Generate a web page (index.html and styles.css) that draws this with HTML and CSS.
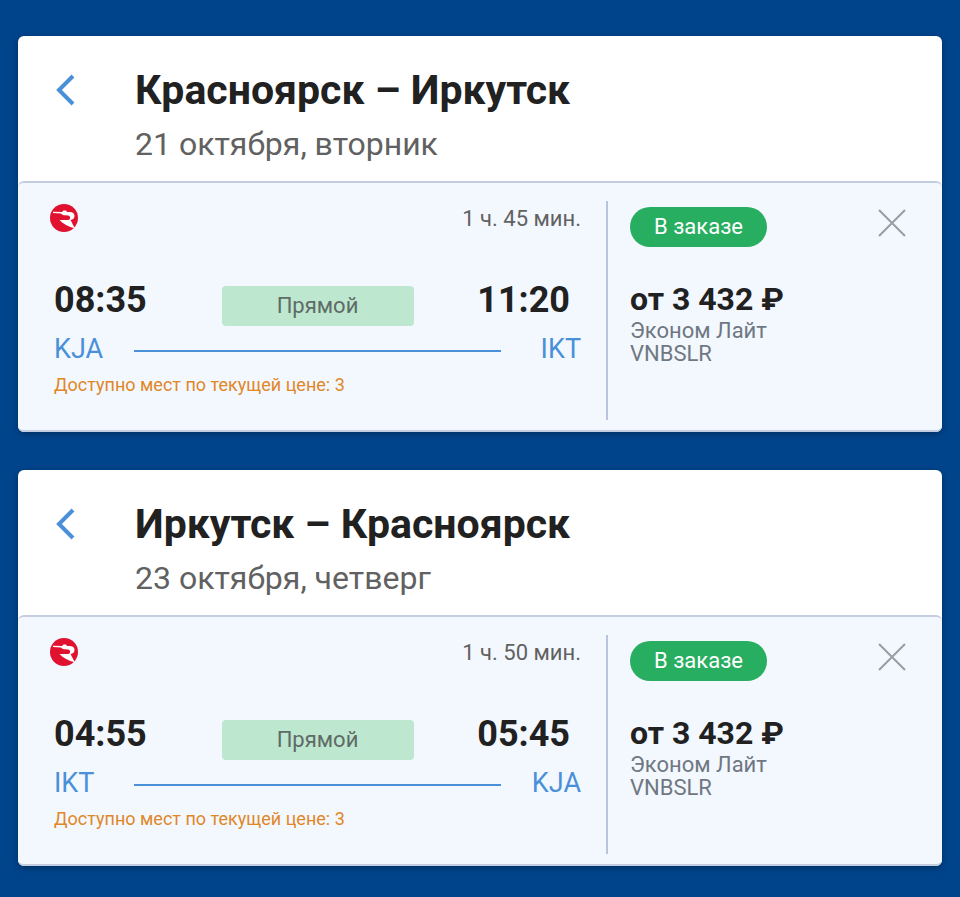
FILE: index.html
```html
<!DOCTYPE html>
<html lang="ru">
<head>
    <meta charset="UTF-8">
    <meta name="viewport" content="width=device-width, initial-scale=1.0">
    <title>Красноярск – Иркутск</title>
    <link rel="stylesheet" href="styles.css">
</head>
<body>

    <main class="trips">
        <section class="card">
            <header class="card-header">
                <button type="button" class="back" aria-label="Назад">
                    <svg width="20" height="32" viewBox="0 0 20 32"><path d="M18 2 4 16l14 14" fill="none" stroke="currentColor" stroke-width="4"/></svg>
                </button>
                <div>
                    <h2>Красноярск – Иркутск</h2>
                    <p class="date">21 октября, вторник</p>
                </div>
            </header>
            <div class="card-body">
                <div class="flight">
                    <div class="flight-top">
                        <svg class="airline" viewBox="0 0 28 28" role="img" aria-label="Россия">
                            <circle cx="14" cy="14" r="14" fill="#e0122f"/>
                            <path d="M3 7.700 12 8l1.500-1.500h2.500L17 8h2.500c3.200 0 5 1.300 5 3.900 0 2.200-1.500 3.500-4 4l4.300 8.300C18.500 22.800 13 20 9.500 16h7.300c2.300 0 3.400-.7 3.400-2.300 0-1.700-1.400-2.500-4.200-2.500-2 .3-4-.2-5-1.700L3 9z" fill="#fff"/>
                        </svg>
                        <span class="duration">1 ч. 45 мин.</span>
                    </div>
                    <div class="times">
                        <span class="time">08:35</span>
                        <span class="stops">Прямой</span>
                        <span class="time time-end">11:20</span>
                    </div>
                    <div class="airports">
                        <span class="code">KJA</span>
                        <span class="line"></span>
                        <span class="code code-end">IKT</span>
                    </div>
                    <p class="seats">Доступно мест по текущей цене: 3</p>
                </div>
                <div class="order">
                    <div class="order-top">
                        <span class="status">В заказе</span>
                        <button type="button" class="remove" aria-label="Удалить">
                            <svg width="28" height="28" viewBox="0 0 28 28"><path d="M1 1l26 26M27 1 1 27" stroke="currentColor" stroke-width="2"/></svg>
                        </button>
                    </div>
                    <p class="price">от 3 432 ₽</p>
                    <p class="tariff">Эконом Лайт</p>
                    <p class="tariff">VNBSLR</p>
                </div>
            </div>
        </section>

        <section class="card">
            <header class="card-header">
                <button type="button" class="back" aria-label="Назад">
                    <svg width="20" height="32" viewBox="0 0 20 32"><path d="M18 2 4 16l14 14" fill="none" stroke="currentColor" stroke-width="4"/></svg>
                </button>
                <div>
                    <h2>Иркутск – Красноярск</h2>
                    <p class="date">23 октября, четверг</p>
                </div>
            </header>
            <div class="card-body">
                <div class="flight">
                    <div class="flight-top">
                        <svg class="airline" viewBox="0 0 28 28" role="img" aria-label="Россия">
                            <circle cx="14" cy="14" r="14" fill="#e0122f"/>
                            <path d="M3 7.700 12 8l1.500-1.500h2.500L17 8h2.500c3.200 0 5 1.300 5 3.900 0 2.200-1.500 3.500-4 4l4.300 8.300C18.500 22.800 13 20 9.500 16h7.300c2.300 0 3.400-.7 3.400-2.300 0-1.700-1.400-2.500-4.200-2.500-2 .3-4-.2-5-1.700L3 9z" fill="#fff"/>
                        </svg>
                        <span class="duration">1 ч. 50 мин.</span>
                    </div>
                    <div class="times">
                        <span class="time">04:55</span>
                        <span class="stops">Прямой</span>
                        <span class="time time-end">05:45</span>
                    </div>
                    <div class="airports">
                        <span class="code">IKT</span>
                        <span class="line"></span>
                        <span class="code code-end">KJA</span>
                    </div>
                    <p class="seats">Доступно мест по текущей цене: 3</p>
                </div>
                <div class="order">
                    <div class="order-top">
                        <span class="status">В заказе</span>
                        <button type="button" class="remove" aria-label="Удалить">
                            <svg width="28" height="28" viewBox="0 0 28 28"><path d="M1 1l26 26M27 1 1 27" stroke="currentColor" stroke-width="2"/></svg>
                        </button>
                    </div>
                    <p class="price">от 3 432 ₽</p>
                    <p class="tariff">Эконом Лайт</p>
                    <p class="tariff">VNBSLR</p>
                </div>
            </div>
        </section>
    </main>

</body>
</html>
```
FILE: styles.css
```css
* {
    box-sizing: border-box;
}
body {
    font-family: Roboto, Arial, sans-serif;
    margin: 0;
    background-color: #00448b;
    color: #212121;
}
h2, p {
    margin: 0;
}
button {
    padding: 0;
    border: none;
    background: none;
    cursor: pointer;
}
svg {
    display: block;
}
.trips {
    display: flex;
    flex-direction: column;
    gap: 38px;
    padding: 36px 18px 30px;
}
.card {
    background-color: white;
    border-radius: 6px;
    box-shadow: 0 2px 6px rgba(0, 0, 0, 0.3);
}
.card-header {
    display: flex;
    align-items: flex-start;
    gap: 60px;
    padding: 30px 38px 17px 37px;
}
.back {
    margin-top: 8px;
    color: #4a90d9;
}
h2 {
    font-size: 41px;
    line-height: 48px;
    font-weight: 700;
}
.date {
    margin-top: 10px;
    font-size: 32px;
    line-height: 40px;
    color: #616161;
}
.card-body {
    display: grid;
    grid-template-columns: 7fr 4fr;
    padding: 18px 0 10px;
    background-color: #f3f8fe;
    border-top: 2px solid #c3cddf;
    border-bottom: 2px solid #c3cddf;
    border-radius: 6px;
}
.flight {
    padding: 3px 25px 23px 36px;
}
.flight-top {
    display: flex;
    justify-content: space-between;
}
.airline {
    width: 28px;
    height: 28px;
    margin-left: -4px;
}
.duration {
    font-size: 22px;
    line-height: 30px;
    color: #616161;
}
.times {
    display: grid;
    grid-template-columns: 1fr 192px 1fr;
    align-items: end;
    margin-top: 40px;
}
.time {
    font-size: 36px;
    line-height: 52px;
    font-weight: 700;
}
.time-end {
    padding-right: 11px;
    text-align: right;
}
.stops {
    border-radius: 4px;
    background-color: #bde7cf;
    color: #5f6b66;
    font-size: 22px;
    line-height: 40px;
    text-align: center;
}
.airports {
    display: flex;
    align-items: center;
    margin-top: 3px;
    color: #4a90d9;
    font-size: 27px;
    line-height: 40px;
}
.code {
    width: 80px;
}
.code-end {
    text-align: right;
}
.line {
    flex: 1;
    height: 2px;
    margin-top: 4px;
    background-color: #4a90d9;
}
.seats {
    margin-top: 4px;
    color: #e08728;
    font-size: 18px;
    line-height: 24px;
}
.order {
    padding: 6px 36px 0 22px;
    border-left: 2px solid #b9c5dc;
}
.order-top {
    display: flex;
    justify-content: space-between;
    align-items: flex-start;
}
.status {
    padding: 0 24px;
    border-radius: 20px;
    background-color: #27ae60;
    color: white;
    font-size: 22px;
    line-height: 40px;
}
.remove {
    margin-top: 2px;
    color: #9a9da3;
}
.price {
    margin-top: 32px;
    font-size: 32px;
    line-height: 40px;
    font-weight: 700;
}
.tariff {
    font-size: 22px;
    line-height: 23px;
    color: #6f7782;
}
```
